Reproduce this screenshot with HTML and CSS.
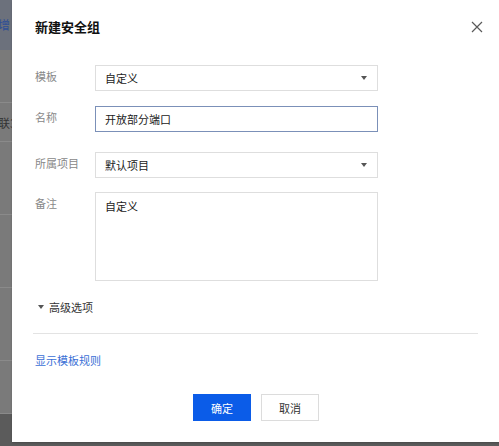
FILE: index.html
```html
<!DOCTYPE html>
<html lang="zh">
<head>
<meta charset="utf-8">
<title>新建安全组</title>
<link rel="stylesheet" href="styles.css">
</head>
<body>
<div class="page">
  <div class="bg">
    <div class="bg-top"><span class="bg-btn">新增</span></div>
    <div class="bg-row"></div>
    <div class="bg-row bg-text">联3</div>
    <div class="bg-row tall"></div>
    <div class="bg-row tall"></div>
    <div class="bg-row tall"></div>
    <div class="bg-row"></div>
    <div class="bg-bottom"></div>
  </div>

  <div class="modal">
    <div class="header">
      <h1 class="title">新建安全组</h1>
      <button class="close" aria-label="关闭">
        <svg width="12" height="12" viewBox="0 0 12 12"><path d="M1 1L11 11M11 1L1 11" stroke="#5a5a5a" stroke-width="1.2" fill="none"/></svg>
      </button>
    </div>

    <div class="form">
      <div class="row r1">
        <label class="label">模板</label>
        <div class="field select"><span>自定义</span><i class="caret"></i></div>
      </div>
      <div class="row r2">
        <label class="label">名称</label>
        <div class="field input focus"><span>开放部分端口</span></div>
      </div>
      <div class="row r3">
        <label class="label">所属项目</label>
        <div class="field select"><span>默认项目</span><i class="caret"></i></div>
      </div>
      <div class="row r4">
        <label class="label">备注</label>
        <div class="field textarea"><span>自定义</span></div>
      </div>
    </div>

    <div class="advanced"><i class="caret small"></i><span>高级选项</span></div>
    <div class="divider"></div>
    <a class="link">显示模板规则</a>

    <div class="footer">
      <button class="btn primary">确定</button>
      <button class="btn">取消</button>
    </div>
  </div>
</div>
</body>
</html>
```

FILE: styles.css
```css
html, body {
  margin: 0;
  padding: 0;
}
body {
  width: 499px;
  height: 446px;
  overflow: hidden;
  background: #5b5b5b;
  font-family: "Noto Sans CJK SC", "Noto Sans", sans-serif;
}
.page {
  position: relative;
  width: 499px;
  height: 446px;
}
.bg {
  display: flex;
  flex-direction: column;
  width: 499px;
  height: 446px;
  background: #7a7a7a;
}
.bg-top {
  height: 50px;
  background: #6c717c;
  display: flex;
  align-items: center;
}
.bg-btn {
  margin-left: -14px;
  color: #2f4f95;
  font-size: 12px;
  line-height: 16px;
}
.bg-row {
  height: 52px;
  border-bottom: 1px solid #8a8a8a;
}
.bg-text {
  height: 38px;
  display: flex;
  align-items: center;
  color: #333;
  font-size: 12px;
  margin-left: -2px;
}
.bg-row.tall {
  height: 72px;
}
.bg-bottom {
  flex: 1;
  background: #5b5b5b;
}

.modal {
  position: absolute;
  left: 12px;
  top: 0;
  width: 500px;
  height: 442px;
  background: #fff;
  box-sizing: border-box;
  padding: 0 21px 0 23px;
  box-shadow: 0 1px 2px rgba(0,0,0,0.2);
}
.header {
  display: flex;
  align-items: center;
  justify-content: space-between;
  padding-top: 17px;
  height: 20px;
}
.title {
  margin: 0;
  font-size: 13px;
  line-height: 20px;
  font-weight: bold;
  color: #111;
}
.close {
  border: 0;
  background: none;
  padding: 0;
  width: 12px;
  height: 12px;
  margin-right: 8px;
  display: flex;
}
.form {
  margin-top: 28px;
  display: flex;
  flex-direction: column;
}
.row {
  display: flex;
  align-items: flex-start;
}
.r2 { margin-top: 15px; }
.r3 { margin-top: 20px; }
.r4 { margin-top: 14px; }
.label {
  width: 60px;
  font-size: 11px;
  line-height: 16px;
  padding-top: 3px;
  color: #888;
}
.field {
  box-sizing: border-box;
  width: 283px;
  height: 26px;
  border: 1px solid #dedede;
  display: flex;
  align-items: center;
  padding: 0 10px 0 9px;
  font-size: 11px;
  line-height: 16px;
  color: #222;
}
.field.focus {
  border-color: #7b90b8;
}
.select {
  justify-content: space-between;
}
.textarea {
  height: 89px;
  align-items: flex-start;
  padding-top: 5px;
}
.caret {
  width: 0;
  height: 0;
  border-left: 3.5px solid transparent;
  border-right: 3.5px solid transparent;
  border-top: 4px solid #555;
}
.caret.small {
  margin: 0 5px 0 3px;
}
.advanced {
  margin-top: 18px;
  display: flex;
  align-items: center;
  font-size: 11px;
  line-height: 16px;
  color: #333;
}
.divider {
  margin-top: 18px;
  margin-left: -2px;
  width: 445px;
  height: 1px;
  background: #e3e3e3;
}
.link {
  display: block;
  margin-top: 18px;
  font-size: 11px;
  line-height: 16px;
  color: #3b6fd6;
}
.footer {
  margin-top: 26px;
  display: flex;
  justify-content: center;
  gap: 10px;
  padding-right: 14px;
}
.btn {
  box-sizing: border-box;
  width: 58px;
  height: 27px;
  border: 1px solid #dcdcdc;
  background: #fff;
  color: #333;
  font-family: inherit;
  font-size: 11px;
  padding: 0;
}
.btn.primary {
  background: #0b5ce8;
  border-color: #0b5ce8;
  color: #fff;
}
```
